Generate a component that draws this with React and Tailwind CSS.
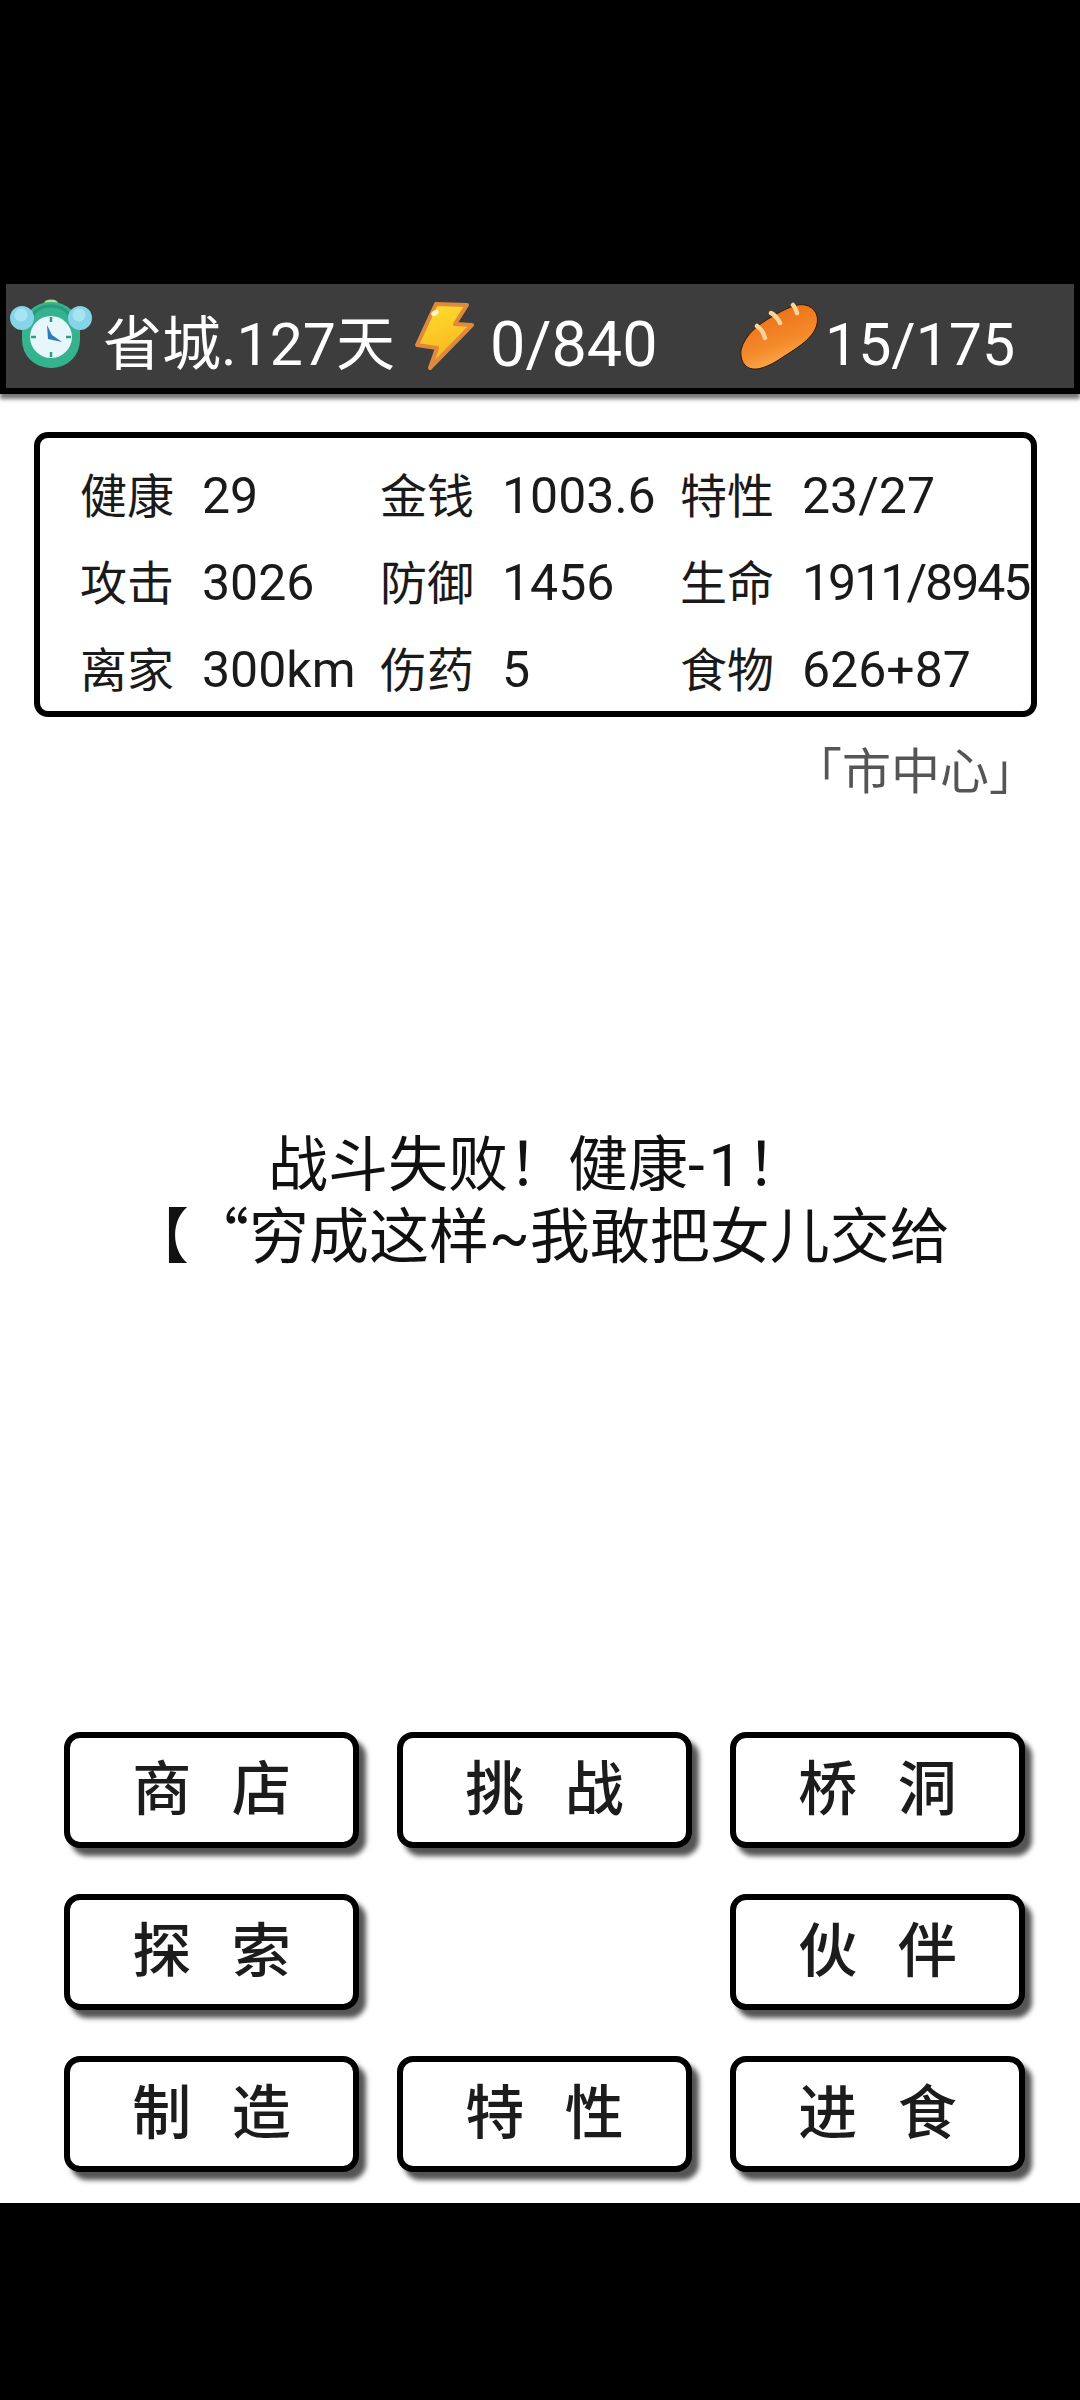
const FONT = { fontFamily: 'Roboto, "Noto Sans CJK SC", sans-serif' };

const stats = [
  [["健康", "29"], ["金钱", "1003.6"], ["特性", "23/27"]],
  [["攻击", "3026"], ["防御", "1456"], ["生命", "1911/8945"]],
  [["离家", "300km"], ["伤药", "5"], ["食物", "626+87"]],
];

const actions = [
  ["商 店", "挑 战", "桥 洞"],
  ["探 索", null, "伙 伴"],
  ["制 造", "特 性", "进 食"],
];

function ClockIcon() {
  return (
    <svg width="82" height="74" viewBox="0 0 82 74" className="shrink-0">
      <ellipse cx="41" cy="4" rx="7" ry="3.5" fill="#b9dc8e" />
      <rect x="12" y="3" width="58" height="66" rx="28" fill="#35b28e" />
      <path d="M20 22 C24 10 32 7 41 7 C50 7 58 10 62 22" fill="none" stroke="#2a9c7c" strokeWidth="3" />
      <circle cx="12" cy="19" r="12" fill="#86d4e8" />
      <circle cx="70" cy="19" r="12" fill="#86d4e8" />
      <circle cx="11" cy="16" r="6.5" fill="#a7e4f2" />
      <circle cx="69" cy="16" r="6.5" fill="#a7e4f2" />
      <circle cx="41" cy="38" r="21" fill="#e6f6fa" />
      <path d="M41 18v5M41 53v5M21 38h5M56 38h5" stroke="#2f9c80" strokeWidth="2.5" />
      <path d="M37 26 L38 40 L52 43 L42 36 Z" fill="#2d7cb6" />
    </svg>
  );
}

function BoltIcon() {
  return (
    <svg width="62" height="74" viewBox="0 0 62 74" className="shrink-0">
      <defs>
        <linearGradient id="bolt" x1="0.3" y1="0" x2="0.6" y2="1">
          <stop offset="0" stopColor="#ffdc2e" />
          <stop offset="1" stopColor="#f7b01c" />
        </linearGradient>
      </defs>
      <path d="M22 5 L53 6 L41 25 L58 26 L16 69 L23 49 L3 46 Z" fill="url(#bolt)" stroke="#dd8a3c" strokeWidth="4" strokeLinejoin="round" />
      <ellipse cx="21" cy="14" rx="4" ry="2.5" fill="#fff7c4" transform="rotate(-30 21 14)" />
    </svg>
  );
}

function BreadIcon() {
  return (
    <svg width="80" height="72" viewBox="0 0 80 72" className="shrink-0">
      <defs>
        <linearGradient id="crust" x1="0.3" y1="0.1" x2="0.7" y2="1">
          <stop offset="0" stopColor="#ec6f1a" />
          <stop offset="0.55" stopColor="#f48a2a" />
          <stop offset="1" stopColor="#fbb95c" />
        </linearGradient>
      </defs>
      <path d="M2 50 C6 34 20 24 34 16 C46 9 58 3 66 5 C76 7 80 16 78 24 C75 38 58 48 44 57 C34 64 22 70 14 69 C5 68 1 60 2 50 Z" fill="url(#crust)" stroke="#2a1a08" strokeWidth="1" />
      <path d="M18 26 C22 29 25 33 26 38 M32 13 C36 15 39 19 41 23 M54 5 C56 7 57 10 58 13" fill="none" stroke="#fbd596" strokeWidth="4.5" strokeLinecap="round" />
    </svg>
  );
}

function ActionButton({ label }) {
  return (
    <button className="w-[295px] h-[116px] flex items-center justify-center rounded-[16px] border-[6px] border-black bg-white text-[59px] font-medium text-[#1c1c1c] [word-spacing:26px] shadow-[7px_8px_5px_#555]">
      {label}
    </button>
  );
}

export default function App() {
  return (
    <div className="w-[1080px] h-[2400px] bg-white flex flex-col overflow-hidden" style={FONT}>
      {/* status bar strip */}
      <div className="bg-black pt-[284px] px-[6px] pb-[6px] shadow-[0_5px_4px_#777]">
        <div className="h-[104px] bg-[#3d3d3d] flex items-center pl-[4px] text-white leading-none whitespace-nowrap">
          <ClockIcon />
          <span className="ml-[11px] w-[311px] text-[59px] pt-[16px]">省城.127天</span>
          <BoltIcon />
          <span className="ml-[14px] w-[249px] text-[63px] pt-[16px]">0/840</span>
          <BreadIcon />
          <span className="ml-[6px] text-[59px] pt-[16px]">15/175</span>
        </div>
      </div>

      {/* character stats */}
      <div className="mt-[38px] mx-[34px] w-[1003px] h-[285px] rounded-[14px] border-[6px] border-black pl-[40px] pt-[18px] flex flex-col justify-center gap-[30px] text-[47px] leading-[57px] text-[#1a1a1a] whitespace-nowrap">
        {stats.map((row, i) => (
          <div key={i} className="flex">
            {row.map(([label, value]) => (
              <div key={label} className="w-[300px] flex items-baseline">
                <span className="w-[122px] shrink-0">{label}</span>
                <span className={value.length > 8 ? "text-[50px] tracking-[-2px]" : "text-[50px]"}>{value}</span>
              </div>
            ))}
          </div>
        ))}
      </div>

      {/* current location */}
      <div className="mt-[28px] pr-[42px] text-right text-[49px] leading-[56px] text-[#555555]">「市中心」</div>

      {/* battle message */}
      <div className="mt-[330px] text-[60px] leading-[70px] text-[#111111] whitespace-nowrap">
        <div className="ml-[268px] h-[66px]">战斗失败！健康<span className="tracking-[4px]">-1</span>！</div>
        <div className="ml-[129px] h-[74px]">【<span className="ml-[30px] font-['Noto_Sans_CJK_SC']">“</span>穷成这样~我敢把女儿交给</div>
      </div>

      {/* action buttons */}
      <div className="mt-[461px] ml-[64px] grid grid-cols-[295px_295px_295px] gap-x-[38px] gap-y-[46px]">
        {actions.flat().map((label, i) =>
          label ? <ActionButton key={i} label={label} /> : <div key={i} />
        )}
      </div>

      {/* bottom strip */}
      <div className="mt-auto h-[197px] bg-black" />
    </div>
  );
}
